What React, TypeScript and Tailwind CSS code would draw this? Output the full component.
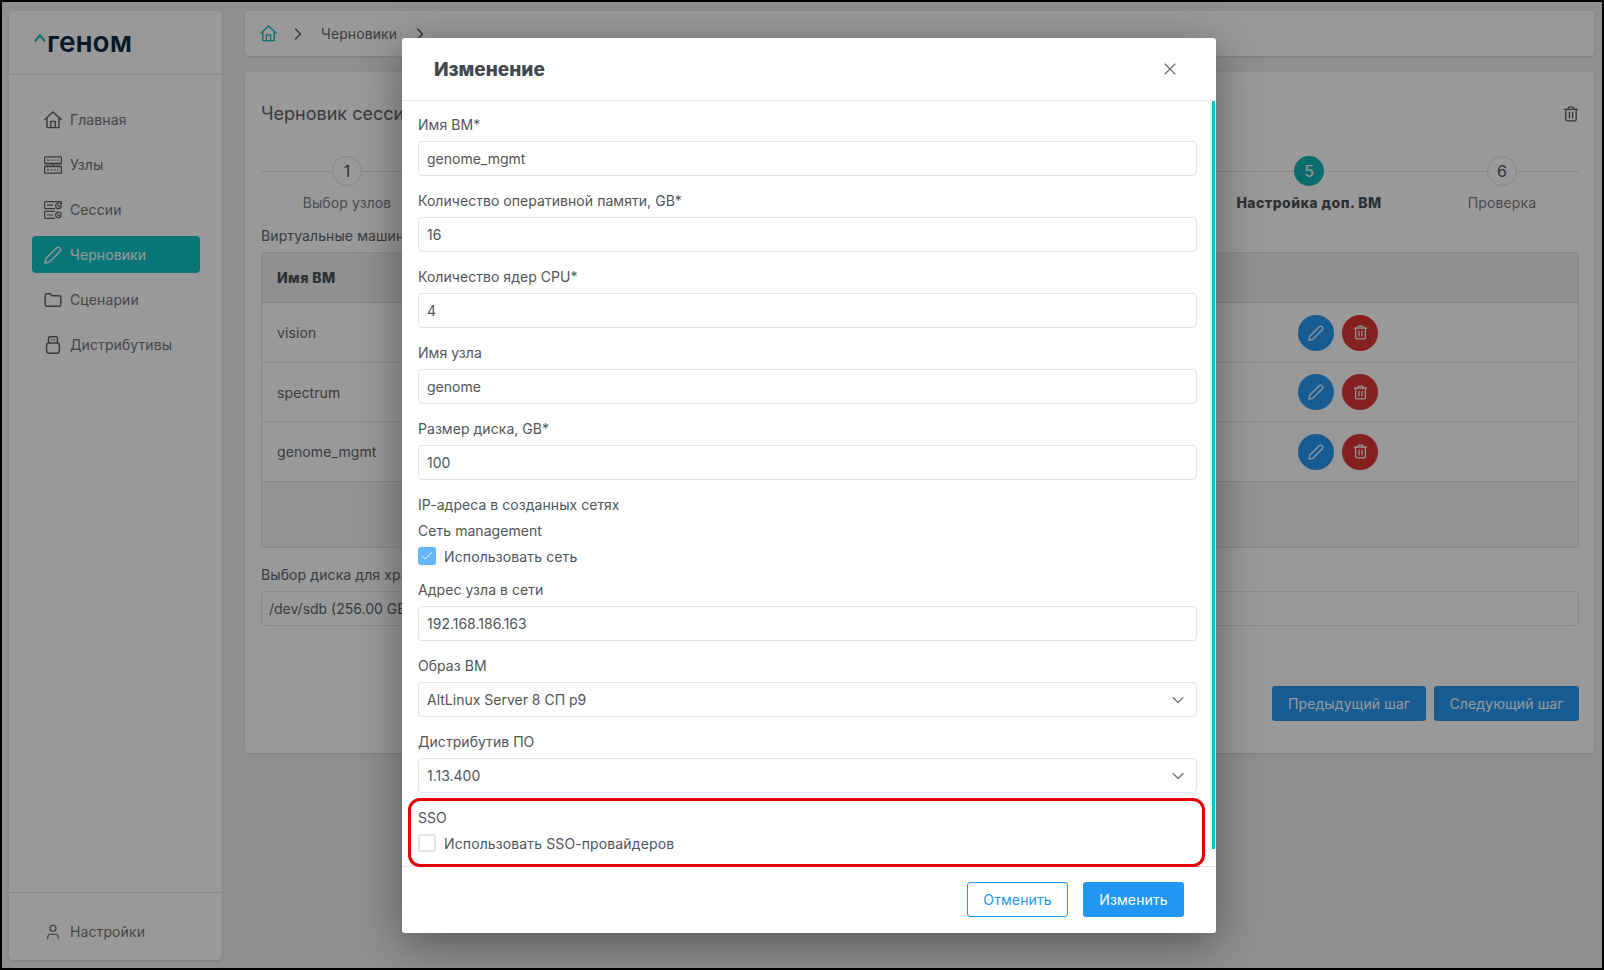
import { ChevronDown, ChevronRight, User, X, Check } from "lucide-react";

const font = "font-['Inter','Noto_Sans',sans-serif]";

function TrashIcon({ className }: { className?: string }) {
  return (
    <svg viewBox="0 0 16 16" fill="none" stroke="currentColor" strokeWidth="1.3" strokeLinecap="round" strokeLinejoin="round" className={className}>
      <path d="M5.2 3V2.2c0-.6.4-1 1-1h3.6c.6 0 1 .4 1 1V3" />
      <path d="M1.6 3.4h12.8" />
      <path d="M2.8 3.4v10c0 .9.6 1.4 1.4 1.4h7.6c.8 0 1.4-.5 1.4-1.4v-10" />
      <path d="M6.4 6.4v5.4M9.6 6.4v5.4" />
    </svg>
  );
}

function HomeIcon({ className }: { className?: string }) {
  return (
    <svg viewBox="0 0 18 18" fill="none" stroke="currentColor" strokeWidth="1.4" strokeLinecap="round" strokeLinejoin="round" className={className}>
      <path d="M0.8 8.6 9 1l8.2 7.6" />
      <path d="M3 7v9.6h12V7" />
      <path d="M6.8 16.6V10.4h4.4v6.2" />
    </svg>
  );
}

function PencilIcon({ className }: { className?: string }) {
  return (
    <svg viewBox="0 0 18 18" fill="none" stroke="currentColor" strokeWidth="1.4" strokeLinejoin="round" className={className}>
      <path d="M1 17l.9-4.4L12.6 1.9c.9-.9 2.2-.9 3 0l.5.5c.8.8.8 2.1 0 2.9L5.4 16.1 1 17z" />
    </svg>
  );
}

function FolderIcon({ className }: { className?: string }) {
  return (
    <svg viewBox="0 0 18 18" fill="none" stroke="currentColor" strokeWidth="1.4" strokeLinejoin="round" className={className}>
      <path d="M1.2 4.2c0-.8.6-1.4 1.4-1.4h3.6l1.8 2h7.4c.8 0 1.4.6 1.4 1.4v7.6c0 .8-.6 1.4-1.4 1.4H2.6c-.8 0-1.4-.6-1.4-1.4V4.2z" />
    </svg>
  );
}

function NodesIcon() {
  return (
    <svg viewBox="0 0 18 18" fill="none" stroke="currentColor" strokeWidth="1.2" className="w-[18px] h-[18px]">
      <rect x="0.6" y="0.8" width="16.8" height="6.6" rx="0.6" />
      <rect x="0.6" y="10.6" width="16.8" height="6.6" rx="0.6" />
      <path d="M9 7.4v3.2M0.6 9h16.8" />
      <path d="M3 4.1h2.4M7 4.1h1.4M10 4.1h1.4M13 4.1h1.4M3 13.9h2.4M7 13.9h1.4M10 13.9h1.4M13 13.9h1.4" strokeWidth="1.4" />
    </svg>
  );
}

function SessionsIcon() {
  return (
    <svg viewBox="0 0 18 18" fill="none" stroke="currentColor" strokeWidth="1.2" className="w-[18px] h-[18px]">
      <path d="M11 7.6H1.4a.8.8 0 0 1-.8-.8V1.4A.8.8 0 0 1 1.4.6h15.2a.8.8 0 0 1 .8.8V3" />
      <path d="M11 17.4H1.4a.8.8 0 0 1-.8-.8v-5.4a.8.8 0 0 1 .8-.8H11" />
      <circle cx="14.4" cy="4.8" r="2.8" />
      <circle cx="14.4" cy="13.8" r="2.8" />
      <path d="M3 4.2h6M3 14h6M13 3.6l2.6 2.4M13 12.6l2.6 2.4" />
    </svg>
  );
}

function UsbIcon() {
  return (
    <svg viewBox="0 0 18 18" fill="none" stroke="currentColor" strokeWidth="1.4" strokeLinejoin="round" className="w-[18px] h-[18px]">
      <path d="M4.6 7V1.8a1 1 0 0 1 1-1h6.8a1 1 0 0 1 1 1V7" />
      <rect x="2.6" y="7" width="12.8" height="10.2" rx="2.4" />
      <path d="M7 3.8h1.2M9.8 3.8H11" />
    </svg>
  );
}

const navItems = [
  { label: "Главная", icon: <HomeIcon className="w-[18px] h-[18px]" /> },
  { label: "Узлы", icon: <NodesIcon /> },
  { label: "Сессии", icon: <SessionsIcon /> },
  { label: "Черновики", icon: <PencilIcon className="w-[18px] h-[18px]" />, active: true },
  { label: "Сценарии", icon: <FolderIcon className="w-[18px] h-[18px]" /> },
  { label: "Дистрибутивы", icon: <UsbIcon /> },
];

function Sidebar() {
  return (
    <aside className="w-[213px] shrink-0 bg-white rounded-[4px] shadow-sm flex flex-col">
      <div className="h-[64px] border-b border-[#e3e5e8] flex items-start pl-[25px] pt-[21px] shrink-0">
        <svg viewBox="0 0 12 8" fill="none" stroke="#14b8ba" strokeWidth="2.2" className="w-[12px] h-[8px] mt-[2px]">
          <path d="M1 7.4 6 1.4l5 6" />
        </svg>
        <span className="text-[#0e2a47] text-[28px] font-semibold leading-[21px] ml-[1px]">геном</span>
      </div>
      <nav className="flex-1 flex flex-col gap-[8px] pl-[23px] pt-[26px]">
        {navItems.map((item) => (
          <div
            key={item.label}
            className={
              item.active
                ? "w-[168px] h-[37px] flex items-center gap-[8px] pl-[12px] rounded-[4px] bg-[#11c3c6] text-white text-[14px] tracking-[0.1px]"
                : "w-[168px] h-[37px] flex items-center gap-[8px] pl-[12px] rounded-[4px] text-[#70757b] text-[14px] tracking-[0.1px]"
            }
          >
            <span className={item.active ? "text-white" : "text-[#5c6066]"}>{item.icon}</span>
            {item.label}
          </div>
        ))}
      </nav>
      <div className="h-[68px] border-t border-[#e3e5e8] pl-[35px] pt-[28px] shrink-0">
        <div className="flex items-center gap-[8px] text-[#70757b] text-[14px] tracking-[0.1px]">
          <User className="w-[18px] h-[18px] text-[#5c6066]" strokeWidth={1.5} />
          Настройки
        </div>
      </div>
    </aside>
  );
}

// labels of steps 2-4 sit behind the modal
const steps = [
  { n: 1, label: "Выбор узлов", w: "w-[172px]" },
  { n: 2, label: "", w: "w-[253px]" },
  { n: 3, label: "", w: "w-[253px]" },
  { n: 4, label: "", w: "w-[254px]" },
  { n: 5, label: "Настройка доп. ВМ", w: "w-[232px]", active: true },
  { n: 6, label: "Проверка", w: "w-[154px]" },
];

function Stepper() {
  return (
    <div className="flex">
      {steps.map((s) => (
        <div key={s.n} className={`${s.w} flex flex-col items-center`}>
          <div className="w-full flex items-center">
            <div className="flex-1 h-px bg-[#dfe1e4]" />
            <div
              className={
                s.active
                  ? "w-[30px] h-[30px] rounded-full bg-[#14b3b5] text-white flex items-center justify-center text-[16px]"
                  : "w-[30px] h-[30px] rounded-full border border-[#dfe1e4] text-[#4b5157] flex items-center justify-center text-[16px]"
              }
            >
              {s.n}
            </div>
            <div className="flex-1 h-px bg-[#dfe1e4]" />
          </div>
          <div
            className={
              s.active
                ? "mt-[7px] h-[20px] text-[14px] leading-[20px] font-extrabold tracking-[0.45px] text-[#4b5157]"
                : "mt-[7px] h-[20px] text-[14px] leading-[20px] tracking-[0.1px] text-[#7b8086]"
            }
          >
            {s.label}
          </div>
        </div>
      ))}
    </div>
  );
}

const rows = [
  { name: "vision", h: "h-[60px]" },
  { name: "spectrum", h: "h-[59px]" },
  { name: "genome_mgmt", h: "h-[60px]" },
];

function VmTable() {
  return (
    <div className="mt-[6px] h-[296px] border border-[#e1e4e8] rounded-[4px] bg-[#f5f5f5] overflow-hidden">
      <div className="h-[50px] bg-[#f0f0f0] border-b border-[#dfe1e4] flex items-center pl-[15px] text-[14px] font-extrabold tracking-[0.4px] text-[#4b5157]">
        Имя ВМ
      </div>
      {rows.map((r) => (
        <div key={r.name} className={`${r.h} bg-white border-b border-[#e1e4e8] grid grid-cols-[1036px_1fr] items-center text-[14px] tracking-[0.1px] text-[#5f6469]`}>
          <div className="pl-[15px]">{r.name}</div>
          <div className="flex gap-[8px]">
            <div className="w-[36px] h-[36px] rounded-full bg-[#2599f5] flex items-center justify-center text-white">
              <PencilIcon className="w-[16px] h-[16px]" />
            </div>
            <div className="w-[36px] h-[36px] rounded-full bg-[#de3636] flex items-center justify-center text-white">
              <TrashIcon className="w-[15px] h-[15px]" />
            </div>
          </div>
        </div>
      ))}
    </div>
  );
}

function MainCard() {
  return (
    <section className="h-[681px] bg-white rounded-[4px] shadow-sm pl-[16px] pr-[15px] pt-[30px]">
      <div className="flex items-center justify-between h-[22px]">
        <h2 className="text-[18px] text-[#5f6469]">Черновик сессии</h2>
        <TrashIcon className="w-[16px] h-[16px] text-[#55595e] mt-[2px]" />
      </div>
      <div className="mt-[32px]">
        <Stepper />
      </div>
      <div className="mt-[13px] text-[14px] leading-[20px] tracking-[0.1px] text-[#5f6469]">Виртуальные машины</div>
      <VmTable />
      <div className="mt-[17px] text-[14px] leading-[20px] tracking-[0.1px] text-[#5f6469]">Выбор диска для хранения</div>
      <div className="mt-[6px] h-[35px] border border-[#e1e4e8] rounded-[4px] flex items-center pl-[7px] text-[14px] text-[#5f6469]">
        /dev/sdb (256.00 GB)
      </div>
      <div className="mt-[60px] flex justify-end gap-[8px]">
        <button className="w-[154px] h-[35px] rounded-[3px] bg-[#2599f5] text-white text-[14px] tracking-[0.1px]">Предыдущий шаг</button>
        <button className="w-[145px] h-[35px] rounded-[3px] bg-[#2599f5] text-white text-[14px] tracking-[0.1px]">Следующий шаг</button>
      </div>
    </section>
  );
}

function Field({ label, value, select }: { label: string; value: string; select?: boolean }) {
  return (
    <div className="mb-[15px]">
      <div className="text-[14px] leading-[20px] tracking-[0.05px] text-[#50555b] mb-[6px]">{label}</div>
      <div className="h-[35px] border border-[#e1e4e8] rounded-[4px] flex items-center justify-between pl-[8px] pr-[8px] text-[14px] text-[#50555b]">
        {value}
        {select && <ChevronDown className="w-[20px] h-[20px] text-[#6b7076]" strokeWidth={1.4} />}
      </div>
    </div>
  );
}

function CheckRow({ label, checked }: { label: string; checked?: boolean }) {
  return (
    <div className="flex items-center gap-[8px] h-[18px] text-[14px] tracking-[0.12px] text-[#50555b]">
      <div
        className={
          checked
            ? "w-[18px] h-[18px] rounded-[3px] bg-[#64b5f6] flex items-center justify-center text-white"
            : "w-[18px] h-[18px] rounded-[3px] border-2 border-[#e3e5e8]"
        }
      >
        {checked && <Check className="w-[14px] h-[14px]" strokeWidth={1.6} />}
      </div>
      {label}
    </div>
  );
}

function Modal() {
  return (
    <div className="absolute left-[400px] top-[36px] w-[814px] h-[895px] bg-white rounded-[3px] shadow-[0_10px_45px_rgba(0,0,0,0.4)] flex flex-col">
      <div className="h-[63px] shrink-0 border-b border-[#e3e5e8] flex items-center justify-between pl-[32px] pr-[36px]">
        <h3 className="text-[19px] font-extrabold text-[#43484e] mt-[3px]">Изменение</h3>
        <X className="w-[20px] h-[20px] text-[#63686e]" strokeWidth={1.3} />
      </div>
      <div className="relative flex-1 pl-[16px] pr-[19px] pt-[14px] overflow-hidden">
        <Field label="Имя ВМ*" value="genome_mgmt" />
        <Field label="Количество оперативной памяти, GB*" value="16" />
        <Field label="Количество ядер CPU*" value="4" />
        <Field label="Имя узла" value="genome" />
        <Field label="Размер диска, GB*" value="100" />
        <div className="text-[14px] leading-[20px] tracking-[0.05px] text-[#50555b]">IP-адреса в созданных сетях</div>
        <div className="mt-[6px] text-[14px] leading-[20px] tracking-[0.05px] text-[#50555b]">Сеть management</div>
        <div className="mt-[6px]">
          <CheckRow label="Использовать сеть" checked />
        </div>
        <div className="mt-[15px]">
          <Field label="Адрес узла в сети" value="192.168.186.163" />
        </div>
        <Field label="Образ ВМ" value="AltLinux Server 8 СП р9" select />
        <Field label="Дистрибутив ПО" value="1.13.400" select />
        <div className="text-[14px] leading-[20px] text-[#50555b] mb-[6px]">SSO</div>
        <CheckRow label="Использовать SSO-провайдеров" />
        <div className="absolute right-[1px] top-0 w-[3px] h-[748px] bg-[#00c4cc]" />
      </div>
      <div className="h-[67px] shrink-0 border-t border-[#e3e5e8] flex items-center justify-end gap-[15px] pr-[32px] pb-[2px]">
        <button className="w-[101px] h-[35px] rounded-[3px] border border-[#2196f3] text-[#2196f3] text-[14px] tracking-[0.1px]">Отменить</button>
        <button className="w-[101px] h-[35px] rounded-[3px] bg-[#2196f3] text-white text-[14px] tracking-[0.1px]">Изменить</button>
      </div>
      <div className="absolute left-[6px] top-[760px] w-[797px] h-[69px] border-[3px] border-[#e60000] rounded-[12px]" />
    </div>
  );
}

export default function App() {
  return (
    <div className={`${font} relative w-[1604px] h-[970px] border-2 border-black bg-[#eceef1] overflow-hidden`}>
      <div className="h-full flex gap-[23px] pl-[7px] pr-[8px] pt-[9px] pb-[8px]">
        <Sidebar />
        <main className="flex-1 min-w-0 flex flex-col gap-[16px]">
          <div className="h-[45px] shrink-0 bg-white rounded-[4px] shadow-sm flex items-center pl-[15px] text-[14px] tracking-[0.1px] text-[#5f6469]">
            <HomeIcon className="w-[17px] h-[17px] text-[#14b8ba]" />
            <ChevronRight className="w-[20px] h-[20px] ml-[11px] text-[#4b5157]" strokeWidth={1.5} />
            <span className="ml-[13px]">Черновики</span>
            <ChevronRight className="w-[20px] h-[20px] ml-[13px] text-[#4b5157]" strokeWidth={1.5} />
          </div>
          <MainCard />
        </main>
      </div>
      <div className="absolute inset-0 bg-black/40" />
      <Modal />
    </div>
  );
}
